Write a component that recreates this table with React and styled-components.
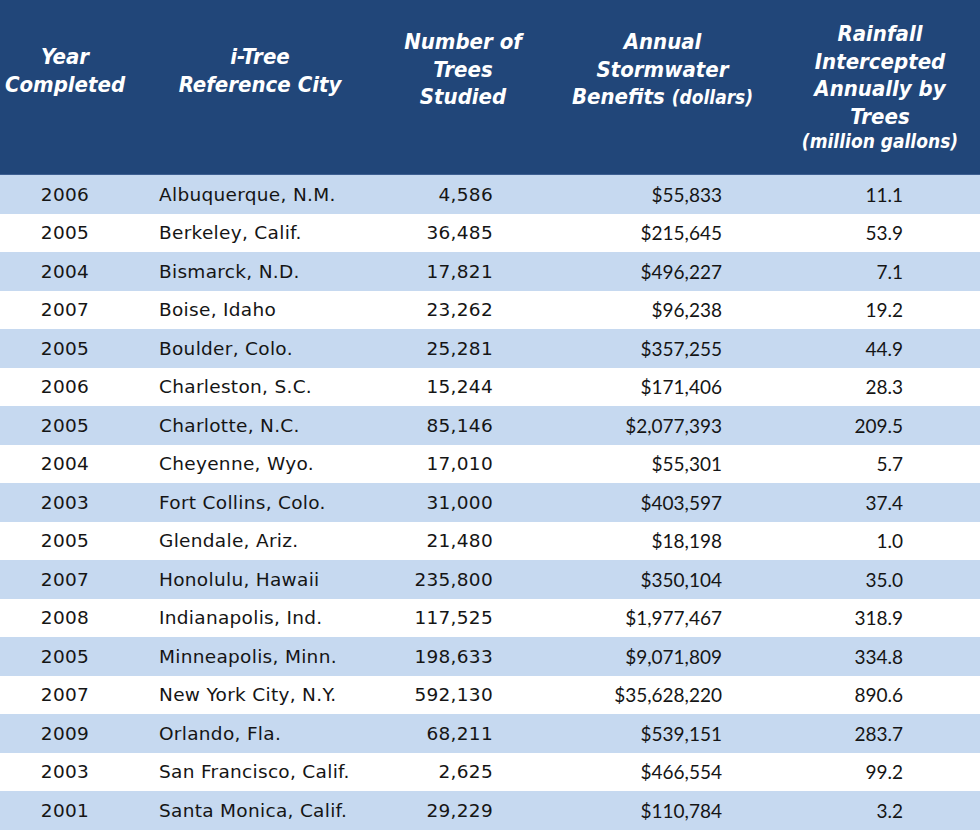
import React from "react";
import styled, { createGlobalStyle } from "styled-components";

const Global = createGlobalStyle`
  html, body { margin: 0; padding: 0; background: #ffffff; }
  #root { width: 980px; }
`;

const COLS = "130px 260px 155px 235px 200px";

const Table = styled.div`
  width: 980px;
  display: flex;
  flex-direction: column;
`;

const HeaderRow = styled.div`
  display: grid;
  grid-template-columns: ${COLS};
  height: 175px;
  background: #214679;
  border-bottom: 1px solid #3d5f92;
  box-sizing: border-box;
`;

const HeaderCell = styled.div`
  padding-top: ${(p) => p.$top}px;
  padding-right: ${(p) => p.$pr || 0}px;
  text-align: center;
  color: #ffffff;
  font-family: "DejaVu Sans Condensed", "DejaVu Sans", sans-serif;
  font-stretch: condensed;
  font-weight: bold;
  font-style: italic;
  font-size: 22px;
  line-height: 27.5px;
`;

const Small = styled.span`
  font-size: 19px;
  line-height: 22px;
  display: ${(p) => (p.$block ? "block" : "inline")};
`;

const Row = styled.div`
  display: grid;
  grid-template-columns: ${COLS};
  height: 38.5px;
  align-items: center;
  background: ${(p) => (p.$shade ? "#c6d9f0" : "#ffffff")};
  color: #151515;
`;

const Cell = styled.div`
  font-family: ${(p) =>
    p.$num ? '"Lato", "Open Sans", sans-serif' : '"DejaVu Sans", sans-serif'};
  font-size: ${(p) => (p.$num ? "19px" : "18.5px")};
  letter-spacing: ${(p) => (p.$num ? "0" : "0.3px")};
  text-align: ${(p) => p.$align || "left"};
  padding-left: ${(p) => p.$pl || 0}px;
  padding-right: ${(p) => p.$pr || 0}px;
  white-space: nowrap;
`;

const data = [
  ["2006", "Albuquerque, N.M.", "4,586", "$55,833", "11.1"],
  ["2005", "Berkeley, Calif.", "36,485", "$215,645", "53.9"],
  ["2004", "Bismarck, N.D.", "17,821", "$496,227", "7.1"],
  ["2007", "Boise, Idaho", "23,262", "$96,238", "19.2"],
  ["2005", "Boulder, Colo.", "25,281", "$357,255", "44.9"],
  ["2006", "Charleston, S.C.", "15,244", "$171,406", "28.3"],
  ["2005", "Charlotte, N.C.", "85,146", "$2,077,393", "209.5"],
  ["2004", "Cheyenne, Wyo.", "17,010", "$55,301", "5.7"],
  ["2003", "Fort Collins, Colo.", "31,000", "$403,597", "37.4"],
  ["2005", "Glendale, Ariz.", "21,480", "$18,198", "1.0"],
  ["2007", "Honolulu, Hawaii", "235,800", "$350,104", "35.0"],
  ["2008", "Indianapolis, Ind.", "117,525", "$1,977,467", "318.9"],
  ["2005", "Minneapolis, Minn.", "198,633", "$9,071,809", "334.8"],
  ["2007", "New York City, N.Y.", "592,130", "$35,628,220", "890.6"],
  ["2009", "Orlando, Fla.", "68,211", "$539,151", "283.7"],
  ["2003", "San Francisco, Calif.", "2,625", "$466,554", "99.2"],
  ["2001", "Santa Monica, Calif.", "29,229", "$110,784", "3.2"],
];

export default function App() {
  return (
    <>
      <Global />
      <Table>
        <HeaderRow>
          <HeaderCell $top={43}>
            Year
            <br />
            Completed
          </HeaderCell>
          <HeaderCell $top={43}>
            i-Tree
            <br />
            Reference City
          </HeaderCell>
          <HeaderCell $top={28} $pr={9}>
            Number of
            <br />
            Trees
            <br />
            Studied
          </HeaderCell>
          <HeaderCell $top={28}>
            Annual
            <br />
            Stormwater
            <br />
            Benefits <Small>(dollars)</Small>
          </HeaderCell>
          <HeaderCell $top={20}>
            Rainfall
            <br />
            Intercepted
            <br />
            Annually by
            <br />
            Trees
            <Small $block>(million gallons)</Small>
          </HeaderCell>
        </HeaderRow>
        {data.map((r, i) => (
          <Row key={i} $shade={i % 2 === 0}>
            <Cell $align="center">{r[0]}</Cell>
            <Cell $pl={29}>{r[1]}</Cell>
            <Cell $align="right" $pr={52}>{r[2]}</Cell>
            <Cell $num $align="right" $pr={58}>{r[3]}</Cell>
            <Cell $num $align="right" $pr={77}>{r[4]}</Cell>
          </Row>
        ))}
      </Table>
    </>
  );
}
